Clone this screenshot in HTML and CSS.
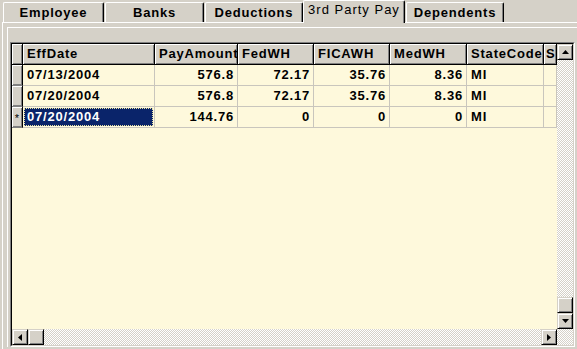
FILE: index.html
```html
<!DOCTYPE html>
<html>
<head>
<meta charset="utf-8">
<link rel="stylesheet" href="styles.css">
</head>
<body>
<div class="tabs">
  <div class="tab t1">Employee</div>
  <div class="tab t2">Banks</div>
  <div class="tab t3">Deductions</div>
  <div class="tab sel">3rd Party Pay</div>
  <div class="tab t5">Dependents</div>
</div>
<div class="panel">
  <div class="frame">
    <div class="grid">
      <div class="grid-in">
        <div class="main">
          <div class="row head">
            <div class="c rs"></div>
            <div class="c">EffDate</div>
            <div class="c">PayAmount</div>
            <div class="c">FedWH</div>
            <div class="c">FICAWH</div>
            <div class="c">MedWH</div>
            <div class="c">StateCode</div>
            <div class="c">S</div>
          </div>
          <div class="row">
            <div class="c rs"></div>
            <div class="c">07/13/2004</div>
            <div class="c num">576.8</div>
            <div class="c num">72.17</div>
            <div class="c num">35.76</div>
            <div class="c num">8.36</div>
            <div class="c">MI</div>
            <div class="c"></div>
          </div>
          <div class="row">
            <div class="c rs"></div>
            <div class="c">07/20/2004</div>
            <div class="c num">576.8</div>
            <div class="c num">72.17</div>
            <div class="c num">35.76</div>
            <div class="c num">8.36</div>
            <div class="c">MI</div>
            <div class="c"></div>
          </div>
          <div class="row">
            <div class="c rs star">*</div>
            <div class="c selcell"><span class="focus">07/20/2004</span></div>
            <div class="c num">144.76</div>
            <div class="c num">0</div>
            <div class="c num">0</div>
            <div class="c num">0</div>
            <div class="c">MI</div>
            <div class="c"></div>
          </div>
        </div>
        <div class="vscroll">
          <div class="btn"><svg width="7" height="4" viewBox="0 0 7 4"><path d="M3.5 0 L7 4 L0 4 Z" fill="#000"/></svg></div>
          <div class="track"></div>
          <div class="btn"></div>
          <div class="btn"><svg width="7" height="4" viewBox="0 0 7 4"><path d="M0 0 L7 0 L3.5 4 Z" fill="#000"/></svg></div>
        </div>
        <div class="hscroll">
          <div class="btn"><svg width="4" height="7" viewBox="0 0 4 7"><path d="M4 0 L4 7 L0 3.5 Z" fill="#000"/></svg></div>
          <div class="btn"></div>
          <div class="track"></div>
          <div class="btn"><svg width="4" height="7" viewBox="0 0 4 7"><path d="M0 0 L4 3.5 L0 7 Z" fill="#000"/></svg></div>
        </div>
        <div class="corner"></div>
      </div>
    </div>
  </div>
</div>
</body>
</html>
```

FILE: styles.css
```css
html, body {
  margin: 0;
  padding: 0;
}
body {
  width: 577px;
  height: 349px;
  overflow: hidden;
  background: #d5d1c8;
  font: bold 13px "Liberation Sans", Arial, sans-serif;
  letter-spacing: 0.8px;
  color: #000;
}
.tabs {
  display: flex;
  align-items: flex-end;
  height: 22px;
  position: relative;
  z-index: 1;
}
.tab {
  box-sizing: border-box;
  height: 20px;
  border-left: 1px solid #fff;
  border-top: 1px solid #fff;
  border-right: 1px solid #000;
  box-shadow: inset -1px 0 #808080;
  border-radius: 2px 2px 0 0;
  text-align: center;
  line-height: 19px;
  white-space: nowrap;
  background: #d5d1c8;
}
.t1 { margin-left: 3px; width: 101px; }
.t2 { margin-left: 1px; width: 99px; }
.t3 { margin-left: 1px; width: 98px; }
.sel {
  width: 102px;
  height: 23px;
  margin-bottom: -1px;
  font-weight: normal;
  letter-spacing: 1px;
  line-height: 18px;
}
.t5 { margin-left: 1px; width: 98px; }

.panel {
  box-sizing: border-box;
  margin-left: 2px;
  height: 327px;
  border-top: 1px solid #fff;
  border-left: 1px solid #fff;
  padding: 4px 0 0 4px;
}
.frame {
  border-top: 1px solid #fff;
  border-left: 1px solid #fff;
  padding: 14px 0 0 2px;
}
.grid {
  width: 565px;
  height: 305px;
  box-sizing: border-box;
  border: 1px solid;
  border-color: #808080 #fff #fff #808080;
}
.grid-in {
  height: 100%;
  box-sizing: border-box;
  border: 1px solid;
  border-color: #000 #d5d1c8 #d5d1c8 #000;
  display: grid;
  grid-template-columns: 545px 16px;
  grid-template-rows: 285px 16px;
}
.main {
  background: #fef9dc;
  overflow: hidden;
}
.row {
  display: grid;
  grid-template-columns: 11px 132px 83px 76px 76px 77px 77px 13px;
  height: 21px;
}
.c {
  box-sizing: border-box;
  border-right: 1px solid #c9c6bd;
  border-bottom: 1px solid #c9c6bd;
  line-height: 20px;
  padding: 0 3px 0 4px;
  white-space: nowrap;
  overflow: hidden;
}
.num {
  text-align: right;
  padding-right: 3px;
}
.head .c {
  background: #d5d1c8;
  border-right: 1px solid #000;
  border-bottom: 1px solid #000;
  box-shadow: inset 1px 1px #fff, inset -1px -1px #808080;
  line-height: 20px;
  font-weight: bold;
}
.head .c:last-child {
  padding-left: 2px;
}
.rs {
  padding: 0;
  background: #d5d1c8;
  border-right: 1px solid #000;
  border-bottom: 1px solid #808080;
  box-shadow: inset 1px 1px #fff, inset -1px -1px #808080;
}
.star {
  font-size: 11px;
  font-weight: normal;
  text-align: center;
  line-height: 22px;
  letter-spacing: 0;
}
.selcell {
  padding: 1px;
}
.focus {
  display: block;
  height: 100%;
  box-sizing: border-box;
  background: #0a246a;
  color: #fff;
  outline: 1px dotted #e8e0a0;
  outline-offset: -1px;
  line-height: 18px;
  padding-left: 3px;
}

.btn {
  box-sizing: border-box;
  width: 16px;
  height: 16px;
  background: #d5d1c8;
  border: 1px solid;
  border-color: #d5d1c8 #000 #000 #d5d1c8;
  box-shadow: inset 1px 1px #fff, inset -1px -1px #808080;
  display: flex;
  align-items: center;
  justify-content: center;
}
.track {
  background: repeating-conic-gradient(#fff 0 25%, #d5d1c8 0 50%) 0 0 / 2px 2px;
}
.vscroll {
  display: grid;
  grid-template-rows: 16px 1fr 16px 16px;
}
.hscroll {
  display: grid;
  grid-template-columns: 16px 16px 1fr 16px;
}
.corner {
  background: repeating-conic-gradient(#fff 0 25%, #d5d1c8 0 50%) 0 0 / 2px 2px;
}
```
